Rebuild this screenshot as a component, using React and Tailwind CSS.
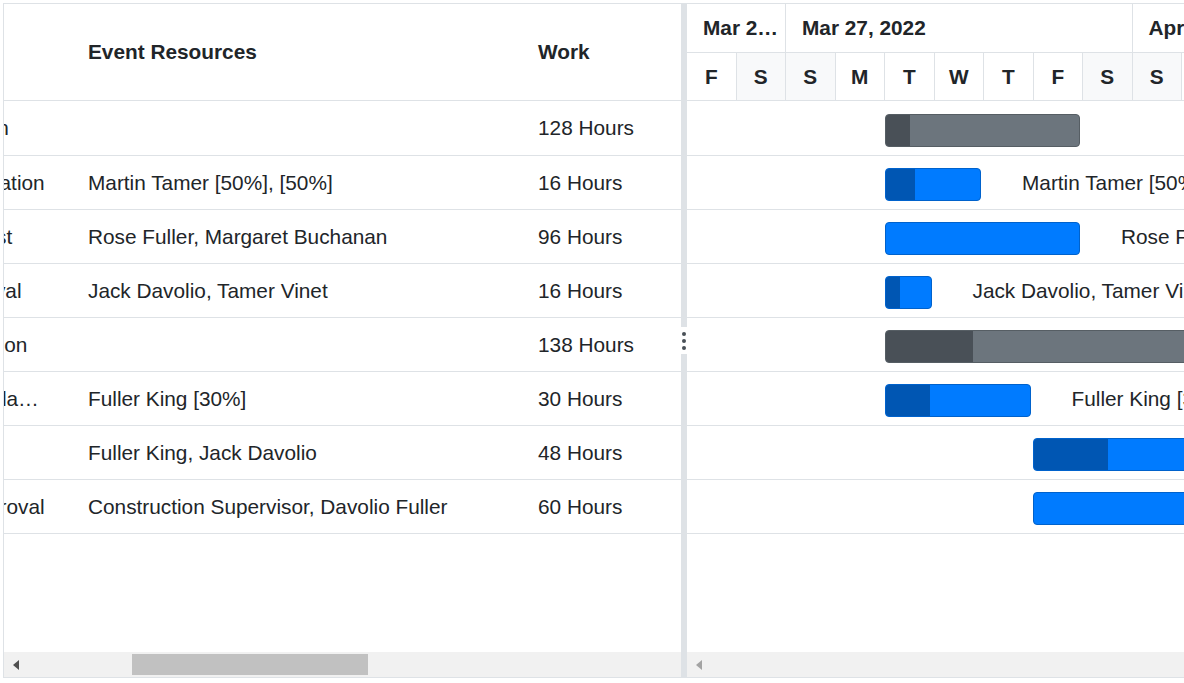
import React from 'react';

const tasks = [
  { name: 'Project initiation', res: '', work: '128 Hours', parent: true, start: 4, days: 4, progress: 25 },
  { name: 'Identify site location', res: 'Martin Tamer [50%], [50%]', work: '16 Hours', start: 4, days: 2, progress: 30 },
  { name: 'Perform soil test', res: 'Rose Fuller, Margaret Buchanan', work: '96 Hours', start: 4, days: 4, progress: 0 },
  { name: 'Soil test approval', res: 'Jack Davolio, Tamer Vinet', work: '16 Hours', start: 4, days: 1, progress: 15 },
  { name: 'Project estimation', res: '', work: '138 Hours', parent: true, start: 4, days: 10, progress: 88 },
  { name: 'Develop floor plan for estimation', res: 'Fuller King [30%]', work: '30 Hours', start: 4, days: 3, progress: 45, narrow: true },
  { name: 'List materials', res: 'Fuller King, Jack Davolio', work: '48 Hours', start: 7, days: 6, progress: 75 },
  { name: 'Estimation approval', res: 'Construction Supervisor, Davolio Fuller', work: '60 Hours', start: 7, days: 6, progress: 0 },
];

const days = ['F', 'S', 'S', 'M', 'T', 'W', 'T', 'F', 'S', 'S', 'M'];
const weekend = [false, true, true, false, false, false, false, false, true, true, false];
const DAY = 49.5;

const LeftArrow = ({ color }) => (
  <svg width="6" height="10" viewBox="0 0 6 10">
    <polygon points="6,0 6,10 0,5" fill={color} />
  </svg>
);

const App = () => {
  return (
    <div className="w-[1184px] h-[683px] bg-white overflow-hidden pl-[3px] pt-[3px] font-['Liberation_Sans',Arial,sans-serif] text-[20.8px] text-[#212529]">
      <div className="w-[1220px] h-[675px] border border-[#dee2e6] flex">
        {/* grid side */}
        <div className="w-[677px] shrink-0 flex flex-col overflow-hidden">
          <div className="h-[97px] shrink-0 border-b border-[#dee2e6] flex items-center overflow-hidden">
            <div className="flex ml-[-158px] font-bold whitespace-nowrap">
              <div className="w-[226px] shrink-0 pl-4 pr-[20px] truncate">Task Name</div>
              <div className="w-[450px] shrink-0 pl-4">Event Resources</div>
              <div className="pl-4">Work</div>
            </div>
          </div>
          <div className="flex-1 overflow-hidden">
            {tasks.map((t, i) => (
              <div
                key={i}
                className={`${i === 0 ? 'h-[55px]' : 'h-[54px]'} border-b border-[#dee2e6] flex items-center overflow-hidden`}
              >
                <div className="flex ml-[-158px] whitespace-nowrap">
                  <div className={`w-[226px] shrink-0 pl-4 truncate ${t.narrow ? 'pr-[31px]' : 'pr-[20px]'}`}>{t.name}</div>
                  <div className="w-[450px] shrink-0 pl-4 truncate">{t.res}</div>
                  <div className="pl-4">{t.work}</div>
                </div>
              </div>
            ))}
          </div>
          <div className="h-[25px] shrink-0 bg-[#f1f1f1] flex items-center">
            <div className="w-[128px] pl-[9px] flex items-center">
              <LeftArrow color="#505050" />
            </div>
            <div className="w-[236px] h-[21px] bg-[#c1c1c1]" />
          </div>
        </div>

        {/* splitter */}
        <div className="w-[6px] shrink-0 flex flex-col">
          <div className="flex-1 bg-[#dee2e6]" />
          <div className="h-[27px] bg-white flex flex-col items-center justify-center gap-[3px]">
            <div className="w-[4px] h-[4px] rounded-full bg-[#495057]" />
            <div className="w-[4px] h-[4px] rounded-full bg-[#495057]" />
            <div className="w-[4px] h-[4px] rounded-full bg-[#495057]" />
          </div>
          <div className="flex-1 bg-[#dee2e6]" />
        </div>

        {/* timeline side */}
        <div className="flex-1 flex flex-col overflow-hidden">
          <div className="h-[97px] shrink-0 border-b border-[#dee2e6] flex flex-col font-bold">
            <div className="h-[49px] border-b border-[#dee2e6] flex whitespace-nowrap">
              <div className="w-[99px] shrink-0 border-r border-[#dee2e6] pl-4 pr-[5px] flex items-center overflow-hidden">
                <span className="truncate">Mar 20, 2022</span>
              </div>
              <div className="w-[346.5px] shrink-0 border-r border-[#dee2e6] pl-4 flex items-center">Mar 27, 2022</div>
              <div className="w-[346.5px] shrink-0 pl-4 flex items-center">Apr 03, 2022</div>
            </div>
            <div className="flex-1 flex">
              {days.map((d, i) => (
                <div
                  key={i}
                  className={`w-[49.5px] shrink-0 border-r border-[#dee2e6] flex items-center justify-center ${weekend[i] ? 'bg-[#f8f9fa]' : 'bg-white'}`}
                >
                  {d}
                </div>
              ))}
            </div>
          </div>
          <div className="flex-1 overflow-hidden">
            {tasks.map((t, i) => {
              const left = Math.floor(t.start * DAY);
              const width = t.days * DAY - 3;
              return (
                <div
                  key={i}
                  className={`${i === 0 ? 'h-[55px]' : 'h-[54px]'} border-b border-[#dee2e6] relative flex items-center`}
                >
                  <div
                    className={`absolute ${i === 0 ? 'top-[13px]' : 'top-[12px]'} h-[33px] rounded-[4px] border overflow-hidden ${
                      t.parent ? 'bg-[#6c757d] border-[#565e64]' : 'bg-[#007bff] border-[#0062cc]'
                    }`}
                    style={{ left, width }}
                  >
                    {t.progress > 0 && (
                      <div
                        className={`h-full ${t.parent ? 'bg-[#495057]' : 'bg-[#0056b3]'}`}
                        style={{ width: t.progress - 1 }}
                      />
                    )}
                  </div>
                  {t.res && (
                    <div className="absolute whitespace-nowrap" style={{ left: left + width + 41 }}>
                      {t.res}
                    </div>
                  )}
                </div>
              );
            })}
          </div>
          <div className="h-[25px] shrink-0 bg-[#f1f1f1] flex items-center pl-[9px]">
            <LeftArrow color="#a3a3a3" />
          </div>
        </div>
      </div>
    </div>
  );
};

export default App;
